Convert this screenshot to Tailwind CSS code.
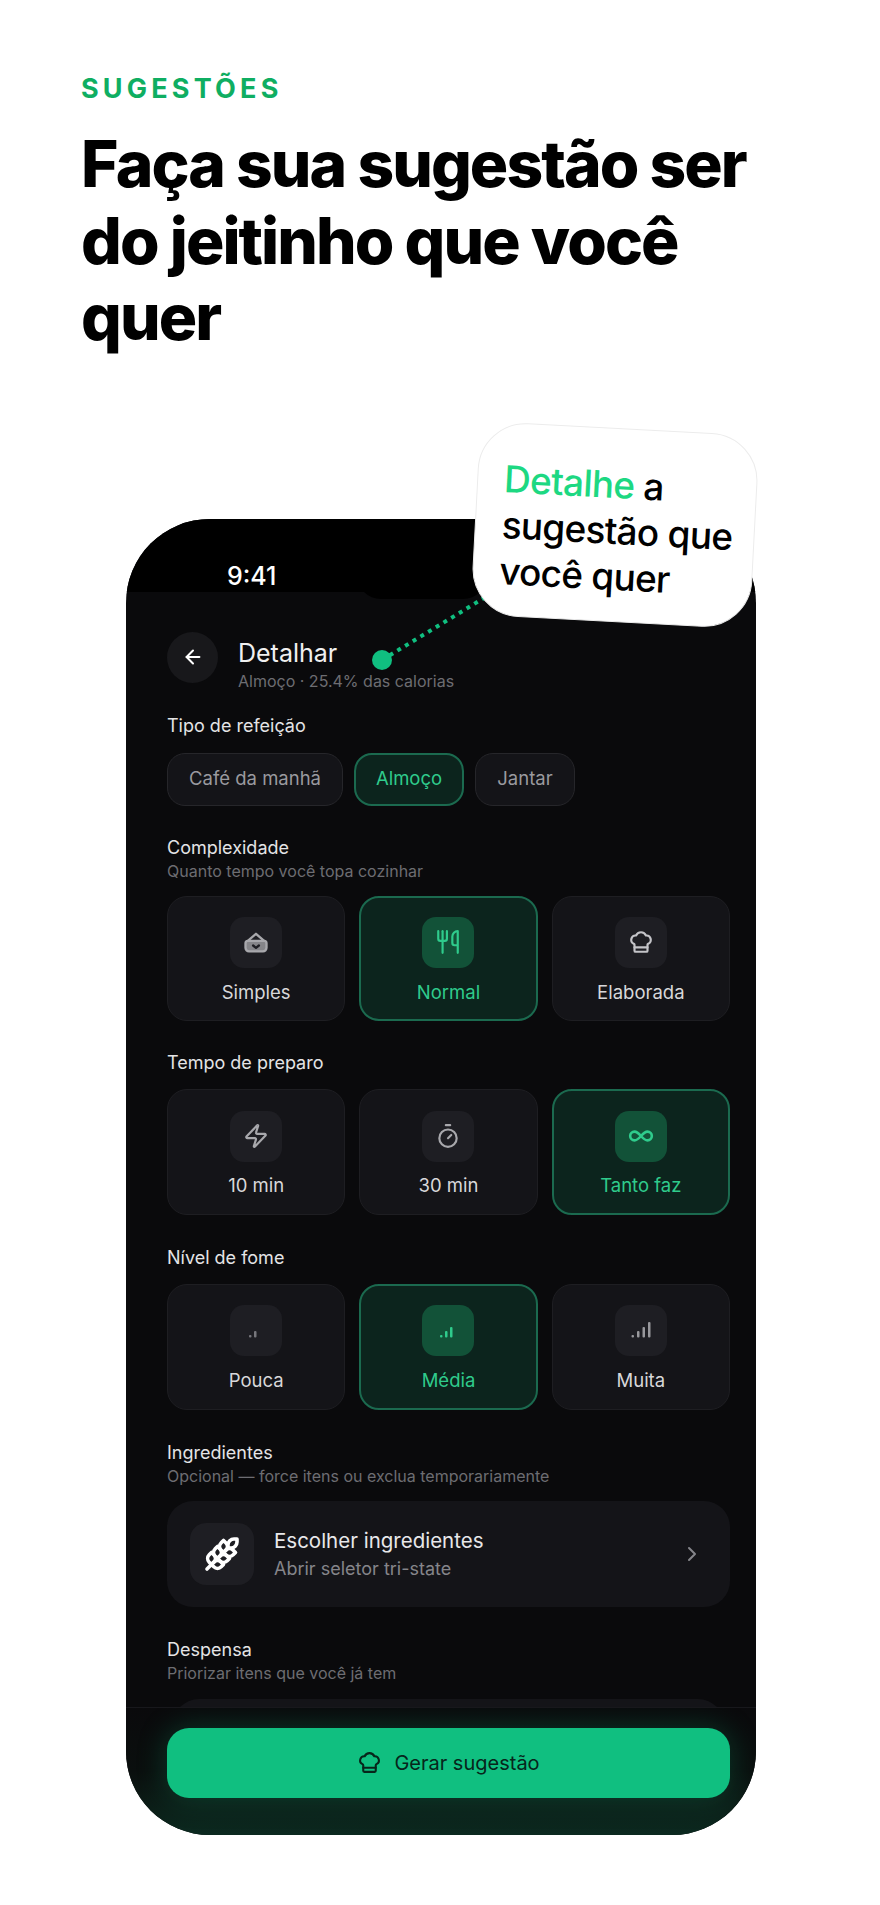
<!DOCTYPE html>
<html lang="pt-BR">
<head>
  <meta charset="UTF-8" />
  <meta name="viewport" content="width=device-width, initial-scale=1.0" />
  <title>Sugestões</title>
  <script src="https://cdn.jsdelivr.net/npm/@tailwindcss/browser@4"></script>
</head>
<body class="bg-white font-['Inter',sans-serif]">
  <div class="w-[880px] h-[1905px] overflow-hidden pt-[75px]">
    <header class="px-[81px]">
      <p class="text-[27px] leading-[28px] font-bold tracking-[0.155em] text-[#0fae62]">SUGESTÕES</p>
      <h1 class="mt-[23px] w-[720px] text-[64px] leading-[76.5px] font-extrabold tracking-[-0.03em] text-black">Faça sua sugestão ser do jeitinho que você quer</h1>
    </header>

    <div class="relative ml-[126px] mt-[163px] w-[630px] h-[1316px]">
      <div class="relative w-full h-full rounded-[84px] overflow-hidden bg-[#0a0a0c] flex flex-col">
        <div class="h-[73px] shrink-0 bg-black pl-[101px] pt-[42px]">
          <span class="block text-[25px] leading-[30px] font-medium text-white">9:41</span>
        </div>
        <div class="absolute left-[231px] top-0 w-[130px] h-[80px] rounded-b-[24px] bg-black"></div>

        <div class="flex-1 min-h-0 overflow-hidden pl-[41px] pr-[26px] pt-[40px]">
          <div class="flex gap-[20px]">
            <div class="w-[51px] h-[51px] rounded-full bg-[#18181b] flex items-center justify-center shrink-0">
              <svg class="w-[22px] h-[22px] text-white" viewBox="0 0 24 24" fill="none" stroke="currentColor" stroke-width="2.2" stroke-linecap="round" stroke-linejoin="round"><path d="m12 19-7-7 7-7"/><path d="M19 12H5"/></svg>
            </div>
            <div class="pt-[6px]">
              <p class="text-[25px] leading-[30px] text-[#f0f0f0]">Detalhar</p>
              <p class="mt-[3px] text-[16px] leading-[20px] text-[#6d6d72]">Almoço · 25.4% das calorias</p>
            </div>
          </div>

          <p class="mt-[24px] text-[18px] leading-[22px] text-[#e4e4e6]">Tipo de refeição</p>
          <div class="mt-[16px] flex gap-[11px]">
            <span class="w-[176px] h-[53px] rounded-[18px] border border-[#26262a] bg-[#141418] flex items-center justify-center text-[18.500px] text-[#9a9a9f]">Café da manhã</span>
            <span class="w-[110px] h-[53px] rounded-[18px] border-2 border-[#1b6a4f] bg-[#0c241d] flex items-center justify-center text-[18.500px] text-[#2fcb8c]">Almoço</span>
            <span class="w-[100px] h-[53px] rounded-[18px] border border-[#26262a] bg-[#141418] flex items-center justify-center text-[18.500px] text-[#9a9a9f]">Jantar</span>
          </div>

          <p class="mt-[31px] text-[18px] leading-[22px] text-[#e4e4e6]">Complexidade</p>
          <p class="mt-[1px] text-[16px] leading-[22px] text-[#6d6d72]">Quanto tempo você topa cozinhar</p>
          <div class="mt-[14px] grid grid-cols-3 gap-[14px]">
            <div class="h-[125px] rounded-[20px] border border-[#1e1e22] bg-[#141418] pt-[20px] flex flex-col items-center">
              <div class="w-[52px] h-[51px] rounded-[14px] bg-[#1e1e23] flex items-center justify-center text-[#a8a8ac]">
                <svg class="w-[28px] h-[28px]" viewBox="0 0 24 24" fill="none" stroke="currentColor" stroke-width="2" stroke-linecap="round" stroke-linejoin="round"><path d="M5 11 12 5l7 6"/><path d="M3 13a2 2 0 0 1 2-2h14a2 2 0 0 1 2 2v4a3 3 0 0 1-3 3H6a3 3 0 0 1-3-3z" fill="currentColor" fill-opacity=".75"/><path d="m9.500 15 2.500 2 2.500-2" stroke="#1e1e23"/></svg>
              </div>
              <span class="mt-[13px] text-[18.500px] leading-[22px] text-[#d8d8da]">Simples</span>
            </div>
            <div class="h-[125px] rounded-[20px] border-2 border-[#1b6a4f] bg-[#0c241d] pt-[19px] flex flex-col items-center">
              <div class="w-[52px] h-[51px] rounded-[14px] bg-[#125238] flex items-center justify-center text-[#2fcb8c]">
                <svg class="w-[26px] h-[26px]" viewBox="0 0 24 24" fill="none" stroke="currentColor" stroke-width="2" stroke-linecap="round" stroke-linejoin="round"><path d="M3 2v7c0 1.100.9 2 2 2h4a2 2 0 0 0 2-2V2"/><path d="M7 2v20"/><path d="M21 15V2a5 5 0 0 0-5 5v6c0 1.100.9 2 2 2h3Zm0 0v7"/></svg>
              </div>
              <span class="mt-[13px] text-[18.500px] leading-[22px] text-[#2fcb8c]">Normal</span>
            </div>
            <div class="h-[125px] rounded-[20px] border border-[#1e1e22] bg-[#141418] pt-[20px] flex flex-col items-center">
              <div class="w-[52px] h-[51px] rounded-[14px] bg-[#1e1e23] flex items-center justify-center text-[#c4c4c8]">
                <svg class="w-[26px] h-[26px]" viewBox="0 0 24 24" fill="none" stroke="currentColor" stroke-width="2" stroke-linecap="round" stroke-linejoin="round"><path d="M17 21a1 1 0 0 0 1-1v-5.350c0-.457.316-.844.727-1.041a4 4 0 0 0-2.134-7.589 5 5 0 0 0-9.186 0 4 4 0 0 0-2.134 7.588c.411.198.727.585.727 1.041V20a1 1 0 0 0 1 1Z"/><path d="M6 17h12"/></svg>
              </div>
              <span class="mt-[13px] text-[18.500px] leading-[22px] text-[#d8d8da]">Elaborada</span>
            </div>
          </div>

          <p class="mt-[31px] text-[18px] leading-[22px] text-[#e4e4e6]">Tempo de preparo</p>
          <div class="mt-[15px] grid grid-cols-3 gap-[14px]">
            <div class="h-[126px] rounded-[20px] border border-[#1e1e22] bg-[#141418] pt-[21px] flex flex-col items-center">
              <div class="w-[52px] h-[51px] rounded-[14px] bg-[#1e1e23] flex items-center justify-center text-[#a8a8ac]">
                <svg class="w-[26px] h-[26px]" viewBox="0 0 24 24" fill="none" stroke="currentColor" stroke-width="2" stroke-linecap="round" stroke-linejoin="round"><path d="M4 14a1 1 0 0 1-.78-1.630l9.900-10.200a.5.5 0 0 1 .86.46l-1.920 6.020A1 1 0 0 0 13 10h7a1 1 0 0 1 .78 1.630l-9.900 10.200a.5.5 0 0 1-.86-.46l1.920-6.020A1 1 0 0 0 11 14z"/></svg>
              </div>
              <span class="mt-[12px] text-[18.500px] leading-[22px] text-[#d8d8da]">10 min</span>
            </div>
            <div class="h-[126px] rounded-[20px] border border-[#1e1e22] bg-[#141418] pt-[21px] flex flex-col items-center">
              <div class="w-[52px] h-[51px] rounded-[14px] bg-[#1e1e23] flex items-center justify-center text-[#a8a8ac]">
                <svg class="w-[26px] h-[26px]" viewBox="0 0 24 24" fill="none" stroke="currentColor" stroke-width="2" stroke-linecap="round" stroke-linejoin="round"><path d="M10 2h4"/><path d="m12 14 3-3"/><circle cx="12" cy="14" r="8"/></svg>
              </div>
              <span class="mt-[12px] text-[18.500px] leading-[22px] text-[#d8d8da]">30 min</span>
            </div>
            <div class="h-[126px] rounded-[20px] border-2 border-[#1b6a4f] bg-[#0c241d] pt-[20px] flex flex-col items-center">
              <div class="w-[52px] h-[51px] rounded-[14px] bg-[#125238] flex items-center justify-center text-[#2fcb8c]">
                <svg class="w-[26px] h-[26px]" viewBox="0 0 24 24" fill="none" stroke="currentColor" stroke-width="2.400" stroke-linecap="round" stroke-linejoin="round"><path d="M6 16c5 0 7-8 12-8a4 4 0 0 1 0 8c-5 0-7-8-12-8a4 4 0 1 0 0 8"/></svg>
              </div>
              <span class="mt-[12px] text-[18.500px] leading-[22px] text-[#2fcb8c]">Tanto faz</span>
            </div>
          </div>

          <p class="mt-[32px] text-[18px] leading-[22px] text-[#e4e4e6]">Nível de fome</p>
          <div class="mt-[15px] grid grid-cols-3 gap-[14px]">
            <div class="h-[126px] rounded-[20px] border border-[#1e1e22] bg-[#141418] pt-[20px] flex flex-col items-center">
              <div class="w-[52px] h-[51px] rounded-[14px] bg-[#1e1e23] flex items-center justify-center text-[#77777c]">
                <svg class="w-[24px] h-[24px]" viewBox="0 0 24 24" fill="currentColor"><rect x="5" y="17" width="2.500" height="2.500" rx="1"/><rect x="10" y="13" width="2.500" height="6.500" rx="1"/></svg>
              </div>
              <span class="mt-[13px] text-[18.500px] leading-[22px] text-[#d8d8da]">Pouca</span>
            </div>
            <div class="h-[126px] rounded-[20px] border-2 border-[#1b6a4f] bg-[#0c241d] pt-[19px] flex flex-col items-center">
              <div class="w-[52px] h-[51px] rounded-[14px] bg-[#125238] flex items-center justify-center text-[#2fcb8c]">
                <svg class="w-[24px] h-[24px]" viewBox="0 0 24 24" fill="currentColor"><rect x="4" y="17" width="2.500" height="2.500" rx="1"/><rect x="9" y="13" width="2.500" height="6.500" rx="1"/><rect x="14" y="9" width="2.500" height="10.500" rx="1"/></svg>
              </div>
              <span class="mt-[13px] text-[18.500px] leading-[22px] text-[#2fcb8c]">Média</span>
            </div>
            <div class="h-[126px] rounded-[20px] border border-[#1e1e22] bg-[#141418] pt-[20px] flex flex-col items-center">
              <div class="w-[52px] h-[51px] rounded-[14px] bg-[#1e1e23] flex items-center justify-center text-[#98989c]">
                <svg class="w-[24px] h-[24px]" viewBox="0 0 24 24" fill="currentColor"><rect x="2.500" y="17" width="2.500" height="2.500" rx="1"/><rect x="8" y="13" width="2.500" height="6.500" rx="1"/><rect x="13.500" y="9" width="2.500" height="10.500" rx="1"/><rect x="19" y="4" width="2.500" height="15.500" rx="1"/></svg>
              </div>
              <span class="mt-[13px] text-[18.500px] leading-[22px] text-[#d8d8da]">Muita</span>
            </div>
          </div>

          <p class="mt-[32px] text-[18px] leading-[22px] text-[#e4e4e6]">Ingredientes</p>
          <p class="mt-[1px] text-[16px] leading-[22px] text-[#6d6d72]">Opcional — force itens ou exclua temporariamente</p>
          <div class="mt-[14px] h-[106px] rounded-[26px] bg-[#141418] pl-[23px] pr-[26px] flex items-center">
            <div class="w-[64px] h-[62px] rounded-[16px] bg-[#1e1e23] flex items-center justify-center text-white shrink-0">
              <svg class="w-[36px] h-[36px]" viewBox="0 0 24 24" fill="none" stroke="currentColor" stroke-width="2.400" stroke-linecap="round" stroke-linejoin="round"><path d="M2 22 16 8"/><path d="M3.470 12.530 5 11l1.530 1.530a3.500 3.500 0 0 1 0 4.940L5 19l-1.530-1.530a3.500 3.500 0 0 1 0-4.940Z"/><path d="M7.470 8.530 9 7l1.530 1.530a3.500 3.500 0 0 1 0 4.940L9 15l-1.530-1.530a3.500 3.500 0 0 1 0-4.940Z"/><path d="M11.470 4.530 13 3l1.530 1.530a3.500 3.500 0 0 1 0 4.940L13 11l-1.530-1.530a3.500 3.500 0 0 1 0-4.940Z"/><path d="M20 2h2v2a4 4 0 0 1-4 4h-2V6a4 4 0 0 1 4-4Z"/><path d="M11.470 17.470 13 19l-1.530 1.530a3.500 3.500 0 0 1-4.940 0L5 19l1.530-1.530a3.500 3.500 0 0 1 4.940 0Z"/><path d="M15.470 13.470 17 15l-1.530 1.530a3.500 3.500 0 0 1-4.940 0L9 15l1.530-1.530a3.500 3.500 0 0 1 4.940 0Z"/><path d="M19.470 9.470 21 11l-1.530 1.530a3.500 3.500 0 0 1-4.940 0L13 11l1.530-1.530a3.500 3.500 0 0 1 4.940 0Z"/></svg>
            </div>
            <div class="ml-[20px] flex-1 pt-[2px]">
              <p class="text-[20.500px] leading-[28px] text-[#e8e8ea]">Escolher ingredientes</p>
              <p class="mt-[1px] text-[18px] leading-[26px] text-[#85858a]">Abrir seletor tri-state</p>
            </div>
            <svg class="w-[24px] h-[24px] text-[#85858a]" viewBox="0 0 24 24" fill="none" stroke="currentColor" stroke-width="2" stroke-linecap="round" stroke-linejoin="round"><path d="m9 18 6-6-6-6"/></svg>
          </div>

          <p class="mt-[32px] text-[18px] leading-[22px] text-[#e4e4e6]">Despensa</p>
          <p class="mt-[1px] text-[16px] leading-[22px] text-[#6d6d72]">Priorizar itens que você já tem</p>
          <div class="mt-[15px] mx-[6px] h-[80px] rounded-[26px] bg-[#141418]"></div>
        </div>
      </div>

      <!-- rodapé fixo do app, por cima da lista -->
      <div class="absolute left-0 right-0 bottom-0 h-[128px] rounded-b-[84px] overflow-hidden border-t border-[#18181c] bg-gradient-to-b from-[#0a0a0c] via-[#0a0f0e] to-[#0b2a20] pl-[41px] pr-[26px] pt-[20px]">
        <div class="h-[70px] rounded-[22px] bg-[#10bf80] shadow-[0_0_30px_rgba(16,191,128,0.25)] flex items-center justify-center gap-[12px] text-[#07261b]">
          <svg class="w-[25px] h-[25px]" viewBox="0 0 24 24" fill="none" stroke="currentColor" stroke-width="2" stroke-linecap="round" stroke-linejoin="round"><path d="M17 21a1 1 0 0 0 1-1v-5.350c0-.457.316-.844.727-1.041a4 4 0 0 0-2.134-7.589 5 5 0 0 0-9.186 0 4 4 0 0 0-2.134 7.588c.411.198.727.585.727 1.041V20a1 1 0 0 0 1 1Z"/><path d="M6 17h12"/></svg>
          <span class="text-[20px]">Gerar sugestão</span>
        </div>
      </div>

      <!-- ligação pontilhada e balão sobre o telefone -->
      <svg class="absolute left-[240px] top-[70px] w-[130px] h-[90px]" viewBox="0 0 130 90" fill="none">
        <path d="M16 71 118 9" stroke="#10bf80" stroke-width="4" stroke-dasharray="4 5"/>
        <circle cx="16" cy="71" r="10" fill="#10bf80"/>
      </svg>
      <div class="absolute left-[349px] top-[-91px] w-[280px] h-[194px] rotate-[3deg] rounded-[48px] bg-white border border-[#ececec] pl-[26px] pt-[33px] text-[37px] leading-[46px] font-medium tracking-[-0.02em] text-black">
        <span class="text-[#1dd882]">Detalhe</span> a<br />sugestão que<br />você quer
      </div>
    </div>
  </div>
</body>
</html>
